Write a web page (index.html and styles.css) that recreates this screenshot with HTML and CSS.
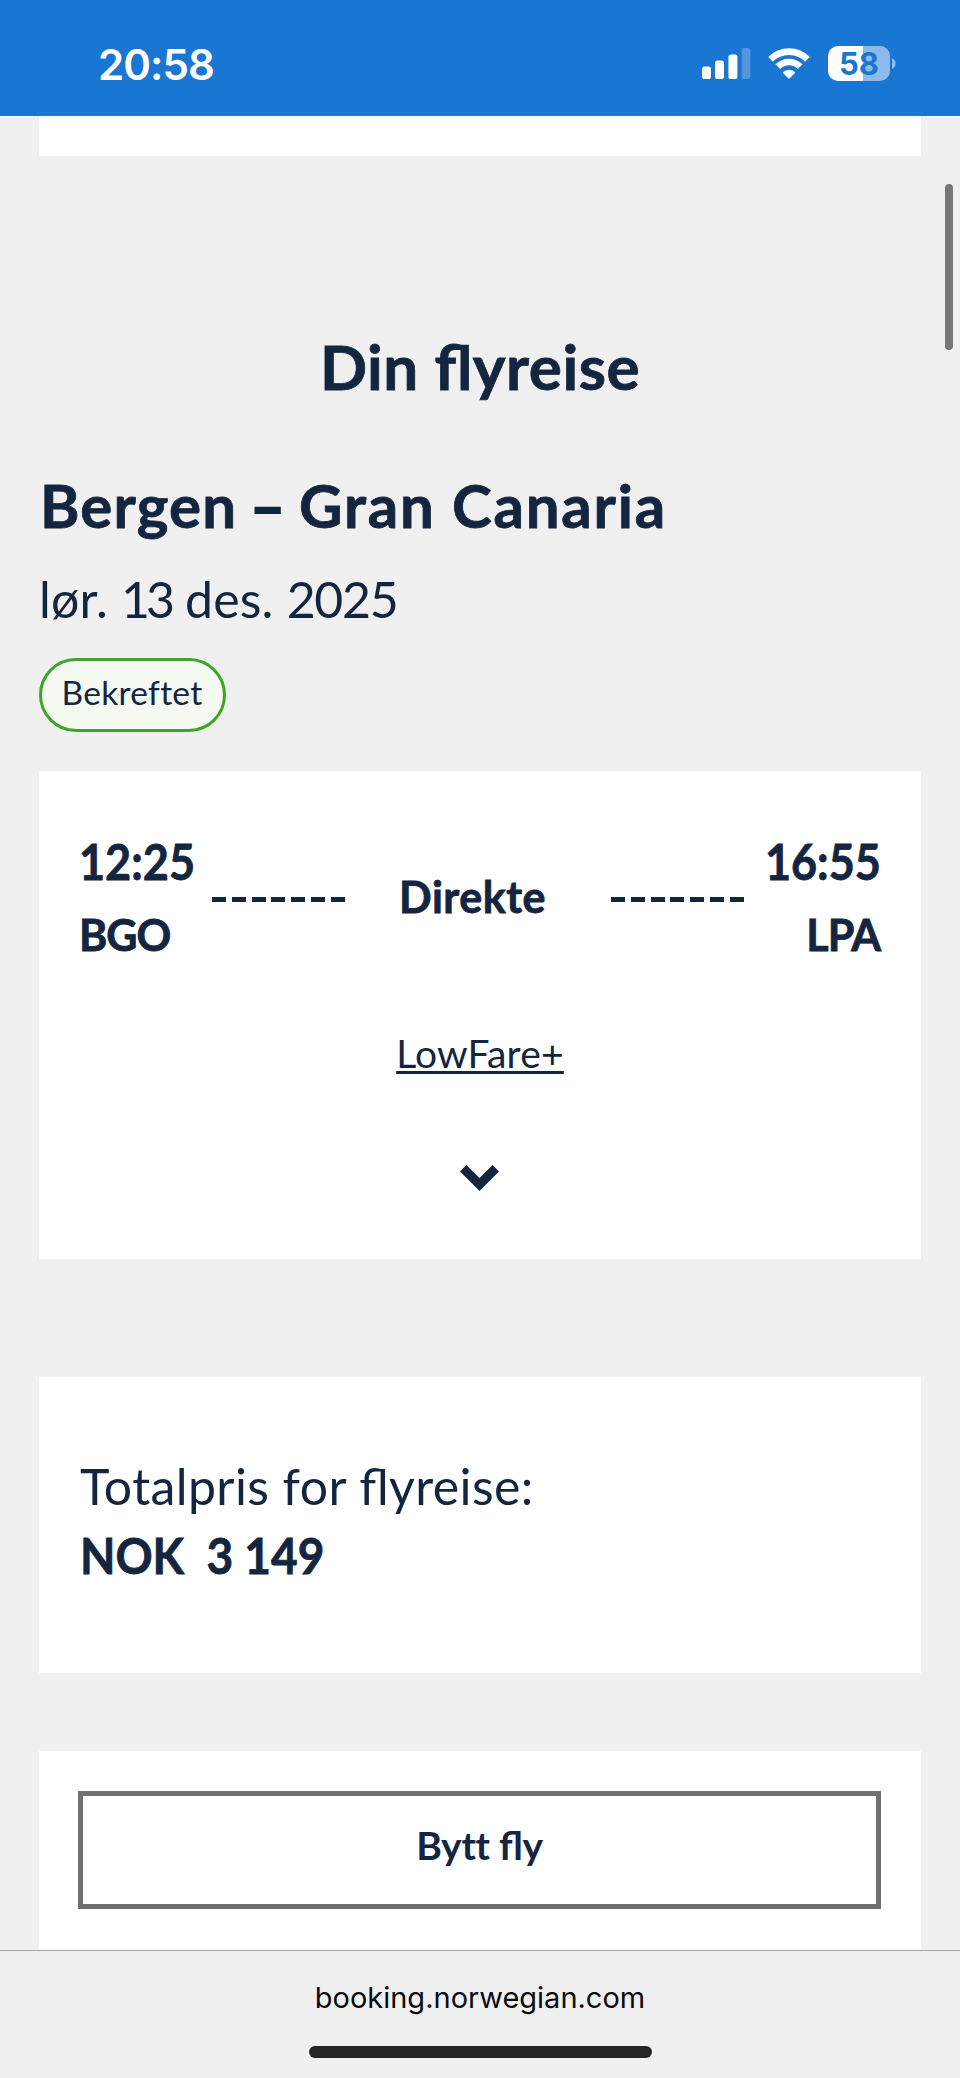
FILE: index.html
```html
<!DOCTYPE html>
<html lang="no">
<head>
<meta charset="utf-8">
<title>Din flyreise</title>
<link rel="stylesheet" href="styles.css">
</head>
<body>
<div class="screen">
  <header class="status">
    <span class="clock">20:58</span>
    <div class="indicators">
      <svg class="signal" width="49" height="31" viewBox="0 0 49 31" fill="#fff">
        <rect x="0" y="18.5" width="9" height="12.5" rx="2.6"/>
        <rect x="13" y="12.5" width="9" height="18.5" rx="2.6"/>
        <rect x="26.4" y="6.5" width="9" height="24.5" rx="2.6"/>
        <rect x="39.7" y="0" width="8.6" height="31" rx="2.6" opacity=".24"/>
      </svg>
      <svg class="wifi" width="42" height="31" viewBox="0 0 42 31" fill="none" stroke="#fff" stroke-width="6.6">
        <path d="M2.6 11.3A26 26 0 0 1 39.4 11.3"/>
        <path d="M9.8 18.6A15.8 15.8 0 0 1 32.2 18.6"/>
        <path d="M14.6 24.4A9 9 0 0 1 27.4 24.4L22 30Q21 31 20 30Z" fill="#fff" stroke="none"/>
      </svg>
      <div class="battery"><span class="level">58</span></div>
      <svg class="nub" width="4" height="11" viewBox="0 0 4 11"><path d="M0 0Q3.6 2 3.6 5.5T0 11Z" fill="#fff" opacity=".5"/></svg>
    </div>
  </header>
  <main class="page">
    <div class="scrollbar"></div>
    <div class="card card-previous"></div>
    <h1 class="title">Din flyreise</h1>
    <h2 class="route">Bergen <span class="dash">–</span> <span class="destination">Gran Canaria</span></h2>
    <p class="date">lør. <span class="day">13</span> des. <span class="year">2025</span></p>
    <span class="badge">Bekreftet</span>
    <section class="card flight">
      <div class="leg">
        <div class="stop">
          <span class="time">12:25</span>
          <span class="airport">BGO</span>
        </div>
        <div class="dashes"></div>
        <span class="direct">Direkte</span>
        <div class="dashes"></div>
        <div class="stop stop-end">
          <span class="time time-end">16:55</span>
          <span class="airport airport-end">LPA</span>
        </div>
      </div>
      <a class="fare">LowFare+</a>
      <svg class="chevron" width="39" height="26" viewBox="0 0 39 26"><path d="M0 6.4L6.4 0L19.5 13L32.6 0L39 6.4L19.5 26Z" fill="#14263f"/></svg>
    </section>
    <section class="card price">
      <span class="price-label">Totalpris for flyreise:</span>
      <span class="price-value">NOK&nbsp; 3 149</span>
    </section>
    <section class="card actions">
      <button class="change"><span class="plain">Bytt</span> fly</button>
    </section>
  </main>
  <footer class="browser-bar">
    <span class="host">booking.norwegian.com</span>
    <div class="home"></div>
  </footer>
</div>
</body>
</html>
```
FILE: styles.css
```css
* { box-sizing: border-box; }
body { margin: 0; background: #f0f0f0; }
.screen {
  display: flex;
  flex-direction: column;
  width: 960px;
  height: 2078px;
  overflow: hidden;
  color: #14263f;
  font-family: Lato, "Liberation Sans", sans-serif;
  font-feature-settings: "liga" 1;
}
.status {
  flex: none;
  display: flex;
  justify-content: space-between;
  height: 116px;
  padding: 46px 64px 0 98px;
  background: #1a76d3;
  border-bottom: 1px solid #3b73ab;
  font-family: Inter, sans-serif;
}
.clock { font-size: 42px; font-weight: 600; line-height: 37px; letter-spacing: -.9px; color: #fff; }
.indicators { display: flex; align-items: flex-start; }
.signal { margin: 2px 17px 0 0; }
.wifi { margin: 2px 18px 0 0; }
.battery {
  width: 62px;
  height: 35px;
  border-radius: 10px;
  background: linear-gradient(90deg, #fff 35px, #8dbae9 35px);
  text-align: center;
}
.level { display: block; color: #1a76d3; font-size: 31px; font-weight: 700; line-height: 35px; }
.nub { margin: 12px 0 0 2px; }
.page {
  position: relative;
  flex: none;
  display: flex;
  flex-direction: column;
  height: 1834px;
  padding: 0 39px;
  border-top: 1px solid #fff;
  overflow: hidden;
}
.scrollbar {
  position: absolute;
  top: 67px;
  right: 7px;
  width: 8px;
  height: 166px;
  border-radius: 4px;
  background: #777;
}
.card { flex: none; background: #fff; }
.card-previous { height: 39px; }
h1, h2, p { margin: 0; }
.title, .route, .leg, .price-value { -webkit-text-stroke: .8px #14263f; }
.title { margin-top: 170px; text-align: center; font-size: 62px; line-height: 80px; letter-spacing: .5px; }
.route { margin-top: 59px; padding-left: 1px; font-size: 60px; line-height: 80px; letter-spacing: 1.2px; white-space: nowrap; }
.dash { margin: 0 -3px; -webkit-text-stroke-width: 2px; }
.destination { letter-spacing: 1.8px; }
.date { margin-top: 24px; font-size: 50px; line-height: 60px; letter-spacing: .2px; }
.day { letter-spacing: -4px; margin-right: 1px; }
.year { letter-spacing: -1.3px; }
.badge {
  flex: none;
  display: flex;
  justify-content: center;
  align-items: center;
  width: 187px;
  height: 74px;
  margin-top: 29px;
  padding: 0 1px 6px 0;
  border: 3px solid #3fa526;
  border-radius: 37px;
  background: #f4f9f1;
  font-size: 33.5px;
  letter-spacing: .3px;
  font-feature-settings: "liga" 0;
}
.flight {
  display: flex;
  flex-direction: column;
  align-items: center;
  height: 488px;
  margin-top: 39px;
  padding: 60px 40px 0;
}
.leg {
  display: grid;
  grid-template-columns: 133px 133px 266px 133px 1fr;
  align-items: center;
  width: 100%;
  font-weight: 700;
}
.stop { display: flex; flex-direction: column; gap: 19px; align-items: flex-start; }
.stop-end { align-items: flex-end; }
.time { font-size: 50px; line-height: 60px; transform: scaleX(.9); transform-origin: left; }
.time-end { transform-origin: right; }
.airport { font-size: 43px; line-height: 50px; letter-spacing: -1px; }
.airport-end { margin-right: 1px; }
.dashes {
  height: 5px;
  margin-top: 8px;
  background: repeating-linear-gradient(90deg, #14263f 0 14px, transparent 14px 19.8px);
}
.direct { padding: 2px 11px 0 0; text-align: center; font-size: 43px; line-height: 50px; letter-spacing: .5px; }
.fare {
  margin-top: 69px;
  padding: 0 3px;
  font-size: 39px;
  line-height: 48px;
  letter-spacing: .2px;
  text-decoration: underline;
  text-decoration-thickness: 3px;
  text-underline-offset: 3px;
}
.chevron { margin: 88px 1px 0 0; }
.price {
  display: flex;
  flex-direction: column;
  height: 296px;
  margin-top: 118px;
  padding: 79px 41px 0;
}
.price-label { font-size: 50px; line-height: 60px; letter-spacing: .4px; }
.price-value {
  align-self: flex-start;
  margin-top: 9px;
  font-size: 50px;
  font-weight: 700;
  line-height: 60px;
  transform: scaleX(.92);
  transform-origin: left;
}
.actions { height: 220px; margin-top: 78px; padding: 40px 40px 0 39px; }
.change {
  display: block;
  width: 100%;
  height: 118px;
  padding: 0 0 10px;
  border: 5px solid #707070;
  background: #fff;
  color: inherit;
  font: 700 39px Lato, sans-serif;
  letter-spacing: -.3px;
  font-feature-settings: "liga" 1;
}
.plain { font-feature-settings: "liga" 0; }
.browser-bar {
  flex: 1;
  display: flex;
  flex-direction: column;
  align-items: center;
  border-top: 1px solid #a3a3a5;
  background: #f0f0f1;
}
.host { margin-top: 29px; color: #0b0b0b; font-family: Inter, sans-serif; font-size: 29px; line-height: 36px; }
.home { width: 343px; height: 12px; margin-top: 30px; border-radius: 6px; background: #262626; }
```
